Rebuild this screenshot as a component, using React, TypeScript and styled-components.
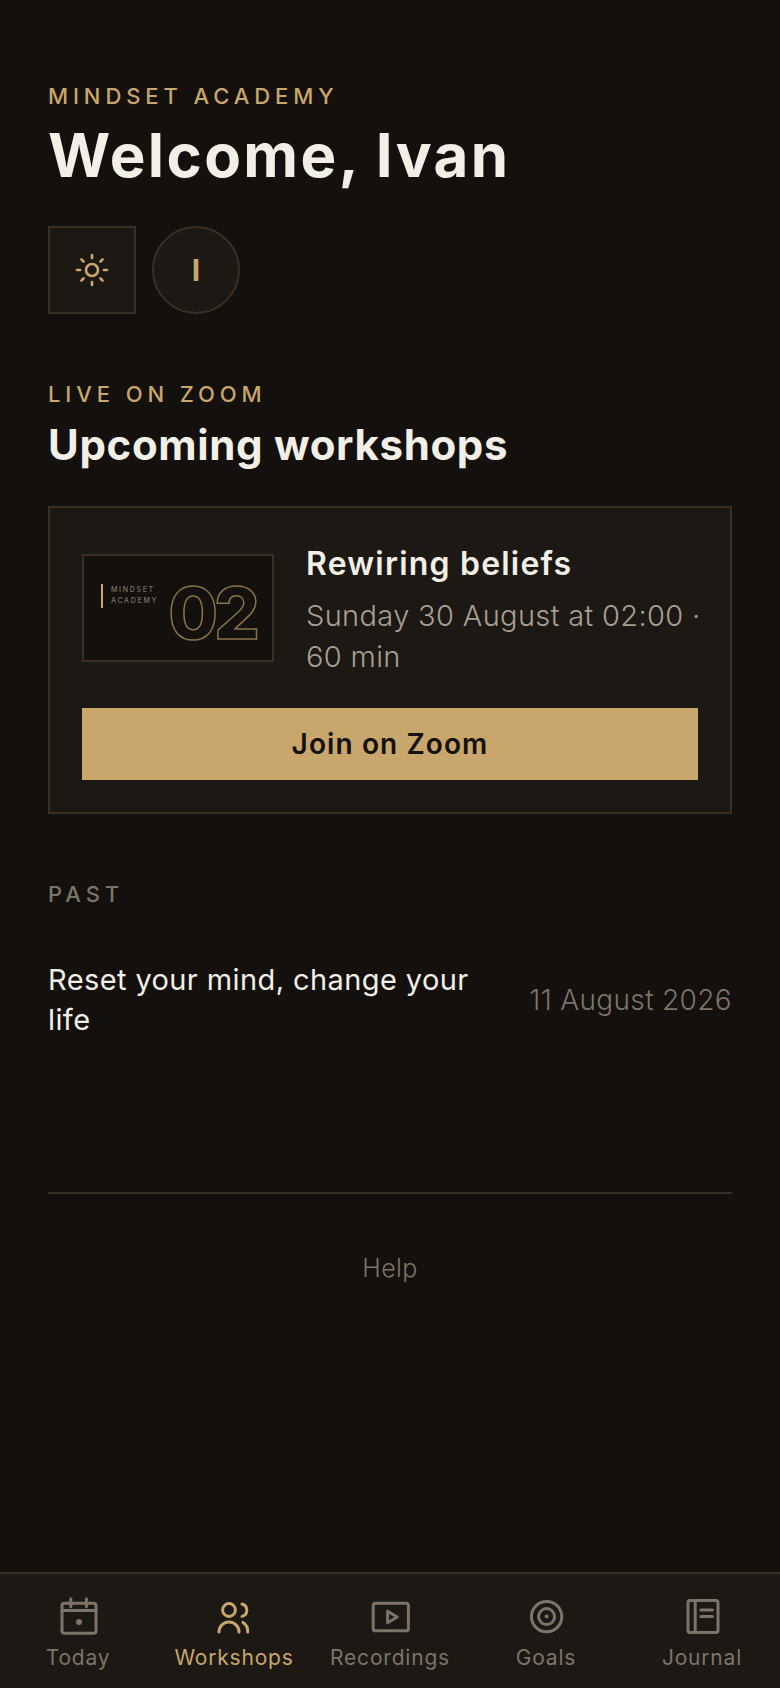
import React from "react";
import styled, { createGlobalStyle } from "styled-components";
import { Sun } from "lucide-react";

const colors = {
  page: "#13100d",
  panel: "#1c1814",
  line: "#3a2f24",
  gold: "#c9a66b",
  cream: "#f2efe6",
  soft: "#a89f92",
  muted: "#7d7468"
};

const GlobalStyle = createGlobalStyle`
  html, body { margin: 0; padding: 0; background: ${colors.page}; }
  * { box-sizing: border-box; }
  body { font-family: Inter, "Noto Sans", "Liberation Sans", sans-serif; }
`;

const Screen = styled.div`
  width: 780px;
  height: 1688px;
  display: flex;
  flex-direction: column;
  background: ${colors.page};
  overflow: hidden;
`;

const Main = styled.main`
  flex: 1;
  display: flex;
  flex-direction: column;
  padding: 82px 48px 0;
`;

const Eyebrow = styled.div<{ $muted?: boolean }>`
  font-size: 22px;
  line-height: 28px;
  font-weight: 500;
  letter-spacing: 4.9px;
  color: ${({ $muted }) => ($muted ? colors.muted : colors.gold)};
`;

const Title = styled.h1`
  margin: 11px 0 0;
  font-size: 60px;
  line-height: 68px;
  font-weight: 700;
  letter-spacing: 2.4px;
  color: ${colors.cream};
`;

const ActionRow = styled.div`
  display: flex;
  gap: 16px;
  margin-top: 37px;
`;

const IconButton = styled.button<{ $round?: boolean }>`
  width: 88px;
  height: 88px;
  padding: 0;
  display: flex;
  align-items: center;
  justify-content: center;
  background: ${colors.panel};
  border: 2px solid ${colors.line};
  border-radius: ${({ $round }) => ($round ? "50%" : "0")};
  color: ${colors.gold};
  font-family: inherit;
  font-size: 30px;
  font-weight: 700;
`;

const Section = styled.section`
  margin-top: 66px;
`;

const SectionTitle = styled.h2`
  margin: 11px 0 0;
  font-size: 42px;
  line-height: 52px;
  font-weight: 700;
  letter-spacing: 0.65px;
  color: ${colors.cream};
`;

const Card = styled.article`
  margin-top: 35px;
  padding: 30px 32px 32px;
  display: flex;
  flex-direction: column;
  gap: 31px;
  background: ${colors.panel};
  border: 2px solid ${colors.line};
`;

const CardTop = styled.div`
  display: flex;
  align-items: center;
  gap: 32px;
`;

const Thumb = styled.div`
  width: 192px;
  height: 108px;
  flex: none;
  display: flex;
  justify-content: space-between;
  padding: 28px 16px 0 17px;
  background: ${colors.page};
  border: 2px solid ${colors.line};
`;

const ThumbBrand = styled.div`
  height: 24px;
  padding-left: 8px;
  border-left: 2px solid ${colors.gold};
  font-size: 7px;
  line-height: 11px;
  font-weight: 500;
  letter-spacing: 1.7px;
  color: ${colors.muted};
`;

const ThumbNumber = styled.div`
  margin-top: -16px;
  font-size: 72px;
  line-height: 90px;
  font-weight: 800;
  letter-spacing: -4px;
  color: transparent;
  -webkit-text-stroke: 1.5px #8a7249;
`;

const CardText = styled.div`
  padding-top: 5px;
`;

const CardTitle = styled.h3`
  margin: 1px 0 0;
  font-size: 32px;
  line-height: 40px;
  font-weight: 600;
  letter-spacing: 1.2px;
  color: ${colors.cream};
`;

const CardMeta = styled.p`
  margin: 11px 0 0;
  font-size: 29px;
  line-height: 41px;
  font-weight: 300;
  letter-spacing: 0.35px;
  white-space: nowrap;
  color: ${colors.soft};
`;

const JoinButton = styled.button`
  height: 72px;
  border: 0;
  background: ${colors.gold};
  color: ${colors.page};
  font-family: inherit;
  font-size: 28px;
  font-weight: 600;
  letter-spacing: 1.1px;
`;

const PastRow = styled.div`
  margin-top: 52px;
  display: flex;
  align-items: center;
  justify-content: space-between;
  gap: 40px;
`;

const PastTitle = styled.div`
  width: 440px;
  font-size: 29px;
  line-height: 40px;
  font-weight: 400;
  letter-spacing: 0.4px;
  color: ${colors.cream};
`;

const PastDate = styled.div`
  flex: none;
  font-size: 28px;
  font-weight: 300;
  letter-spacing: 0.35px;
  color: ${colors.muted};
`;

const Footer = styled.div`
  margin-top: 152px;
  padding-top: 57px;
  border-top: 2px solid ${colors.line};
  text-align: center;
  font-size: 25px;
  line-height: 34px;
  font-weight: 300;
  letter-spacing: 0.4px;
  color: ${colors.muted};
`;

const TabBar = styled.nav`
  height: 116px;
  flex: none;
  display: grid;
  grid-template-columns: repeat(5, 1fr);
  background: ${colors.panel};
  border-top: 2px solid ${colors.line};
`;

const Tab = styled.div<{ $active?: boolean }>`
  display: flex;
  flex-direction: column;
  align-items: center;
  padding-top: 18px;
  color: ${({ $active }) => ($active ? colors.gold : colors.muted)};
`;

const TabIcon = styled.svg`
  width: 48px;
  height: 48px;
  fill: none;
  stroke: currentColor;
  stroke-width: 1.5;
  stroke-linecap: round;
  stroke-linejoin: round;
`;

const TabLabel = styled.span`
  margin-top: 4px;
  font-size: 21px;
  line-height: 28px;
  font-weight: 400;
  letter-spacing: 0.8px;
  white-space: nowrap;
`;

const tabs = [
  {
    label: "Today",
    icon: (
      <>
        <rect x="4" y="5.6" width="17" height="15" rx="1.2" />
        <path d="M8.4 3.4v4M16.2 3.4v4M4 9.2h17" />
        <circle cx="12.5" cy="15" r="1.5" fill="currentColor" stroke="none" />
      </>
    )
  },
  {
    label: "Workshops",
    active: true,
    icon: (
      <>
        <circle cx="9.5" cy="9" r="3.2" />
        <path d="M4.5 20a5 5 0 0 1 10 0M16 6a3.2 3.2 0 0 1 0 6.2M16.5 15.2A5 5 0 0 1 18.8 20" />
      </>
    )
  },
  {
    label: "Recordings",
    icon: (
      <>
        <rect x="3.6" y="5.6" width="17.6" height="13.8" rx="1.2" />
        <path d="M10.8 9.6v5.8l4.8-2.9z" />
      </>
    )
  },
  {
    label: "Goals",
    icon: (
      <>
        <circle cx="12.3" cy="12.3" r="7.6" />
        <circle cx="12.3" cy="12.3" r="4" />
        <circle cx="12.3" cy="12.3" r="1" fill="currentColor" stroke="none" />
      </>
    )
  },
  {
    label: "Journal",
    icon: (
      <>
        <rect x="5" y="4.2" width="15" height="16" rx="1" />
        <path d="M8.6 4.2v16M11.4 9h5.8M11.4 12.3h5.8" />
      </>
    )
  }
];

const App: React.FC = () => {
  return (
    <Screen>
      <GlobalStyle />
      <Main>
        <Eyebrow>MINDSET ACADEMY</Eyebrow>
        <Title>Welcome, Ivan</Title>
        <ActionRow>
          <IconButton aria-label="Theme">
            <Sun size={36} strokeWidth={1.75} />
          </IconButton>
          <IconButton $round>I</IconButton>
        </ActionRow>
        <Section>
          <Eyebrow>LIVE ON ZOOM</Eyebrow>
          <SectionTitle>Upcoming workshops</SectionTitle>
          <Card>
            <CardTop>
              <Thumb>
                <ThumbBrand>
                  MINDSET
                  <br />
                  ACADEMY
                </ThumbBrand>
                <ThumbNumber>02</ThumbNumber>
              </Thumb>
              <CardText>
                <CardTitle>Rewiring beliefs</CardTitle>
                <CardMeta>
                  Sunday 30 August at 02:00 ·
                  <br />
                  60 min
                </CardMeta>
              </CardText>
            </CardTop>
            <JoinButton>Join on Zoom</JoinButton>
          </Card>
        </Section>
        <Section>
          <Eyebrow $muted>PAST</Eyebrow>
          <PastRow>
            <PastTitle>Reset your mind, change your life</PastTitle>
            <PastDate>11 August 2026</PastDate>
          </PastRow>
        </Section>
        <Footer>Help</Footer>
      </Main>
      <TabBar>
        {tabs.map(tab => (
          <Tab key={tab.label} $active={tab.active}>
            <TabIcon viewBox="0 0 24 24">{tab.icon}</TabIcon>
            <TabLabel>{tab.label}</TabLabel>
          </Tab>
        ))}
      </TabBar>
    </Screen>
  );
};

export default App;
